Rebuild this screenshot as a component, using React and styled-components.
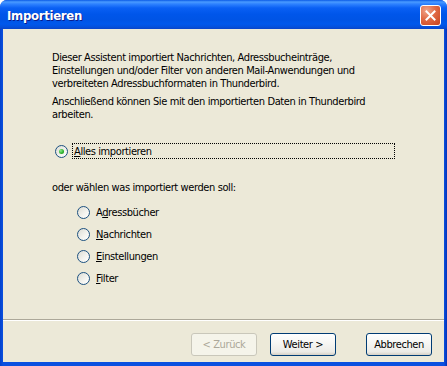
import React from "react";
import styled, { createGlobalStyle, css } from "styled-components";

const Global = createGlobalStyle`
  html, body { margin: 0; padding: 0; background: #ffffff; }
  body { width: 447px; height: 366px; overflow: hidden; }
`;

const uiFont = `"DejaVu Sans Condensed", "DejaVu Sans", sans-serif`;

const Window = styled.div`
  width: 447px;
  height: 366px;
  display: flex;
  flex-direction: column;
  box-sizing: border-box;
  background: #0a46d8;
  border-radius: 7px 7px 0 0;
  overflow: hidden;
  font-family: ${uiFont};
  font-size: 11px;
  letter-spacing: -0.4px;
  color: #000;
`;

const TitleBar = styled.div`
  height: 29px;
  flex: 0 0 29px;
  display: flex;
  align-items: center;
  justify-content: space-between;
  padding: 0 6px 0 7px;
  box-sizing: border-box;
  background: linear-gradient(
    to bottom,
    #0b5ae6 0px,
    #4a9bff 2px,
    #2e82ff 4px,
    #0a60f4 8px,
    #0056ea 14px,
    #0054e5 20px,
    #0058ec 24px,
    #0450dc 27px,
    #0a44c8 29px
  );
`;

const Title = styled.span`
  color: #ffffff;
  font-family: "DejaVu Sans Condensed", "DejaVu Sans", sans-serif;
  font-weight: bold;
  font-size: 13px;
  letter-spacing: -0.3px;
  text-shadow: 1px 1px 0 #0a1c8c;
  padding-top: 1px;
`;

const CloseButton = styled.div`
  width: 21px;
  height: 21px;
  box-sizing: border-box;
  border: 1px solid #ffffff;
  border-radius: 3px;
  background: radial-gradient(circle at 30% 25%, #f0a48a 0%, #e06a45 45%, #c8421c 100%);
  display: flex;
  align-items: center;
  justify-content: center;
  margin-top: 1px;
`;

const Frame = styled.div`
  flex: 1;
  display: flex;
  flex-direction: column;
  padding: 0 3px 4px 3px;
  background: linear-gradient(to right, #0442cc, #0a50e0 3px, #0a50e0 calc(100% - 3px), #0332b8);
`;

const Client = styled.div`
  flex: 1;
  display: flex;
  flex-direction: column;
  background: #ece9d8;
`;

const Content = styled.div`
  flex: 1;
  padding: 22px 49px 0 49px;
  display: flex;
  flex-direction: column;
`;

const Para = styled.p`
  margin: 0;
  line-height: 13px;
  & + & { margin-top: 5px; }
`;

const Prompt = styled.div`
  line-height: 13px;
  margin-top: 22px;
`;

const RadioRow = styled.label`
  display: flex;
  align-items: center;
  height: ${(p) => (p.$main ? "16px" : "22px")};
  margin-left: ${(p) => (p.$main ? "3px" : "25px")};
  ${(p) => p.$main && css`margin-top: 22px;`}
`;

const SubList = styled.div`
  display: flex;
  flex-direction: column;
  margin-top: 7px;
`;

const Circle = styled.span`
  width: 13px;
  height: 13px;
  box-sizing: border-box;
  border-radius: 50%;
  border: 1px solid #1c5180;
  background: linear-gradient(135deg, #dcdcd4 0%, #f4f4f0 60%, #ffffff 100%);
  display: flex;
  align-items: center;
  justify-content: center;
  flex: 0 0 13px;
`;

const Dot = styled.span`
  width: 5px;
  height: 5px;
  border-radius: 50%;
  background: radial-gradient(circle at 35% 35%, #8ee88e 0%, #2fb42f 55%, #1a8a1a 100%);
`;

const RadioLabel = styled.span`
  margin-left: ${(p) => (p.$main ? "4px" : "6px")};
  line-height: 13px;
  ${(p) =>
    p.$focused &&
    css`
      flex: 1;
      border: 1px dotted #000;
      padding: 0 1px;
      height: 14px;
      display: flex;
      align-items: center;
    `}
`;

const Accel = styled.span`
  text-decoration: underline;
`;

const Divider = styled.div`
  height: 1px;
  background: #aca899;
  border-bottom: 1px solid #ffffff;
`;

const ButtonBar = styled.div`
  display: flex;
  align-items: center;
  padding: 12px 12px 6px 188px;
`;

const Button = styled.div`
  width: 66px;
  height: 23px;
  box-sizing: border-box;
  border-radius: 3px;
  border: 1px solid ${(p) => (p.$disabled ? "#c9c7ba" : "#003c74")};
  background: ${(p) =>
    p.$disabled
      ? "#f5f4ea"
      : "linear-gradient(to bottom, #ffffff 0%, #f7f7f4 40%, #ecebe6 85%, #d6d0c5 100%)"};
  color: ${(p) => (p.$disabled ? "#aca899" : "#000")};
  display: flex;
  align-items: center;
  justify-content: center;
  margin-left: ${(p) => p.$gap || 0}px;
`;

function Radio({ checked, main, focused, label }) {
  return (
    <RadioRow $main={main}>
      <Circle>{checked && <Dot />}</Circle>
      <RadioLabel $main={main} $focused={focused}>
        <span>{label}</span>
      </RadioLabel>
    </RadioRow>
  );
}

export default function App() {
  return (
    <>
      <Global />
      <Window>
        <TitleBar>
          <Title>Importieren</Title>
          <CloseButton>
            <svg width="11" height="11" viewBox="0 0 11 11">
              <path d="M1.5 1.5 L9.5 9.5 M9.5 1.5 L1.5 9.5" stroke="#ffffff" strokeWidth="2" strokeLinecap="square" />
            </svg>
          </CloseButton>
        </TitleBar>
        <Frame>
          <Client>
            <Content>
              <Para>
                Dieser Assistent importiert Nachrichten, Adressbucheinträge,
                <br />
                Einstellungen und/oder Filter von anderen Mail-Anwendungen und
                <br />
                verbreiteten Adressbuchformaten in Thunderbird.
              </Para>
              <Para>
                Anschließend können Sie mit den importierten Daten in Thunderbird
                <br />
                arbeiten.
              </Para>
              <Radio main checked focused label={<><Accel>A</Accel>lles importieren</>} />
              <Prompt>oder wählen was importiert werden soll:</Prompt>
              <SubList>
                <Radio label={<>A<Accel>d</Accel>ressbücher</>} />
                <Radio label={<><Accel>N</Accel>achrichten</>} />
                <Radio label={<><Accel>E</Accel>instellungen</>} />
                <Radio label={<><Accel>F</Accel>ilter</>} />
              </SubList>
            </Content>
            <Divider />
            <ButtonBar>
              <Button $disabled>&lt; Zurück</Button>
              <Button $gap={13}>Weiter &gt;</Button>
              <Button $gap={30}>Abbrechen</Button>
            </ButtonBar>
          </Client>
        </Frame>
      </Window>
    </>
  );
}
